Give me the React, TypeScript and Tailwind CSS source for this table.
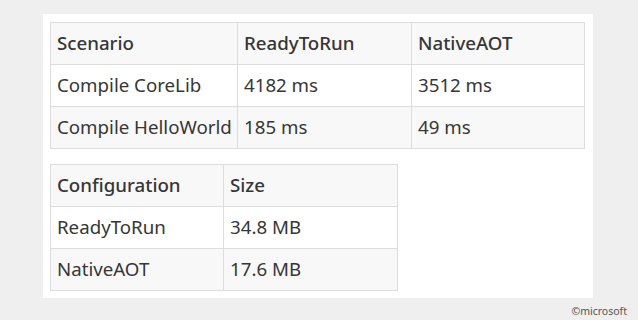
const perf = [
  ["Compile CoreLib", "4182 ms", "3512 ms"],
  ["Compile HelloWorld", "185 ms", "49 ms"],
];

const sizes = [
  ["ReadyToRun", "34.8 MB"],
  ["NativeAOT", "17.6 MB"],
];

const cell = "border border-[#dddddd] px-[6px] h-[42px] text-left align-middle whitespace-nowrap";

export default function App() {
  return (
    <div className="relative w-[638px] h-[320px] bg-[#efefef] font-['Noto_Sans',sans-serif] text-[#363636]">
      <div className="absolute left-[43px] top-[14px] w-[550px] h-[284px] bg-white pl-[7px] pt-[8px]">
        <table className="border-collapse text-[18.7px] w-[535px] table-fixed">
          <thead>
            <tr className="bg-[#f8f8f8]">
              <th className={`${cell} font-medium w-[187px]`}>Scenario</th>
              <th className={`${cell} font-medium w-[174px]`}>ReadyToRun</th>
              <th className={`${cell} font-medium`}>NativeAOT</th>
            </tr>
          </thead>
          <tbody>
            {perf.map((r, i) => (
              <tr key={i} className={i % 2 ? "bg-[#f8f8f8]" : "bg-white"}>
                {r.map((c, j) => (
                  <td key={j} className={`${cell} font-normal`}>{c}</td>
                ))}
              </tr>
            ))}
          </tbody>
        </table>
        <table className="border-collapse text-[18.7px] w-[348px] mt-[15px] table-fixed">
          <thead>
            <tr className="bg-[#f8f8f8]">
              <th className={`${cell} font-medium w-[173px]`}>Configuration</th>
              <th className={`${cell} font-medium`}>Size</th>
            </tr>
          </thead>
          <tbody>
            {sizes.map((r, i) => (
              <tr key={i} className={i % 2 ? "bg-[#f8f8f8]" : "bg-white"}>
                {r.map((c, j) => (
                  <td key={j} className={`${cell} font-normal`}>{c}</td>
                ))}
              </tr>
            ))}
          </tbody>
        </table>
      </div>
      <div className="absolute right-[11px] bottom-[4px] text-[10.5px] text-[#555555] leading-none">©microsoft</div>
    </div>
  );
}
